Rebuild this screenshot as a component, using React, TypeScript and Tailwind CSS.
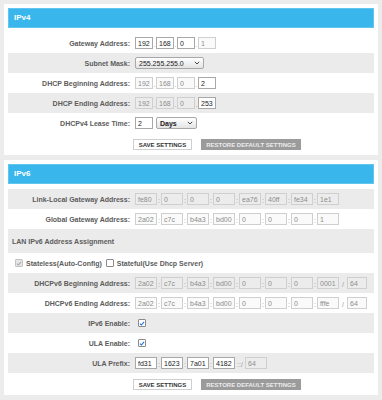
import React from "react";

function Box({ v, w = "w-[18px]", dis = false }: { v: string; w?: string; dis?: boolean }) {
  return (
    <span
      className={`${w} h-[12px] shrink-0 flex items-center px-[2px] text-[7px] leading-none border ${
        dis
          ? "bg-[rgba(239,239,239,0.3)] border-[#cfcfcf] text-[#8c8c8c]"
          : "bg-white border-[#a8a8a8] text-[#1a1a1a]"
      }`}
    >
      {v}
    </span>
  );
}

function Sep({ c, w = "w-[3px]" }: { c: string; w?: string }) {
  return (
    <span className={`${w} shrink-0 flex justify-center text-[7px] leading-none text-[#9a9a9a] pt-[2px]`}>{c}</span>
  );
}

function Row({ label, gray, children }: { label: string; gray?: boolean; children: React.ReactNode }) {
  return (
    <div className={`flex items-center h-[20px] ${gray ? "bg-[#ebebeb]" : "bg-white"}`}>
      <span className="w-[122px] shrink-0 text-right text-[7px] font-bold text-[#5c5c5c] leading-none">{label}</span>
      <div className="ml-[5px] flex items-center">{children}</div>
    </div>
  );
}

function V4({ vals, dis }: { vals: string[]; dis: boolean[] }) {
  return (
    <>
      {vals.map((v, i) => (
        <React.Fragment key={i}>
          {i > 0 && <Sep c="." />}
          <Box v={v} dis={dis[i]} />
        </React.Fragment>
      ))}
    </>
  );
}

function V6({ vals, dis, prefix }: { vals: string[]; dis: boolean[]; prefix?: boolean }) {
  return (
    <>
      {vals.map((v, i) => (
        <React.Fragment key={i}>
          {i > 0 && <Sep c=":" w="w-[4px]" />}
          <Box v={v} w="w-[22px]" dis={dis[i]} />
        </React.Fragment>
      ))}
      {prefix && (
        <>
          <Sep c="/" w="w-[8px]" />
          <Box v="64" w="w-[20px]" dis />
        </>
      )}
    </>
  );
}

function Chevron() {
  return (
    <svg width="6" height="4" viewBox="0 0 6 4" className="shrink-0">
      <path d="M0.8 0.8 L3 3 L5.2 0.8" fill="none" stroke="#333" strokeWidth="0.9" />
    </svg>
  );
}

function Select({ v, w, bold }: { v: string; w: string; bold?: boolean }) {
  return (
    <span
      className={`${w} h-[12px] shrink-0 flex items-center justify-between pl-[3px] pr-[3px] border border-[#a8a8a8] rounded-[2px] bg-gradient-to-b from-white to-[#e4e4e4] text-[7px] leading-none text-[#222] ${
        bold ? "font-bold" : ""
      }`}
    >
      <span>{v}</span>
      <Chevron />
    </span>
  );
}

function Check({ checked, dis }: { checked?: boolean; dis?: boolean }) {
  return (
    <span
      className={`w-[8px] h-[8px] shrink-0 flex items-center justify-center border rounded-[1px] ${
        dis ? "bg-[#e6e6e6] border-[#c4c4c4]" : "bg-white border-[#8a8a8a]"
      }`}
    >
      {checked && (
        <svg width="7" height="7" viewBox="0 0 8 8">
          <path
            d="M1.3 4.2 L3.2 6 L6.8 1.8"
            fill="none"
            stroke={dis ? "#a8a8a8" : "#1a6fe0"}
            strokeWidth="1.4"
          />
        </svg>
      )}
    </span>
  );
}

function Buttons() {
  return (
    <div className="flex items-center gap-[9px] pl-[125px] pt-[6px]">
      <span className="w-[59px] h-[11px] flex items-center justify-center border border-[#cfcfcf] bg-white text-[6px] font-bold text-[#333] leading-none">
        SAVE SETTINGS
      </span>
      <span className="w-[100px] h-[11px] flex items-center justify-center bg-[#9b9b9b] text-[6px] font-bold text-[#ececec] leading-none">
        RESTORE DEFAULT SETTINGS
      </span>
    </div>
  );
}

function Header({ t }: { t: string }) {
  return (
    <div className="h-[20px] flex items-center pl-[5px] bg-[#39b6ec] border border-[#62c5f0] text-white text-[8px] font-bold leading-none">
      {t}
    </div>
  );
}

const ALL = [true, true, true, true, true, true, true, true];

export default function App() {
  return (
    <div className="min-h-[400px] bg-[#ececec] pt-[4px] px-[4px] font-['Liberation_Sans',Arial,sans-serif]">
      <section className="bg-white px-[4px] pt-[4px] pb-[5px]">
        <Header t="IPv4" />
        <div className="mt-[5px]">
          <Row label="Gateway Address:">
            <V4 vals={["192", "168", "0", "1"]} dis={[false, false, false, true]} />
          </Row>
          <Row label="Subnet Mask:" gray>
            <Select v="255.255.255.0" w="w-[69px]" />
          </Row>
          <Row label="DHCP Beginning Address:">
            <V4 vals={["192", "168", "0", "2"]} dis={[true, true, true, false]} />
          </Row>
          <Row label="DHCP Ending Address:" gray>
            <V4 vals={["192", "168", "0", "253"]} dis={[true, true, true, false]} />
          </Row>
          <Row label="DHCPv4 Lease Time:">
            <Box v="2" />
            <span className="w-[3px]" />
            <Select v="Days" w="w-[41px]" bold />
          </Row>
        </div>
        <Buttons />
      </section>

      <section className="mt-[5px] bg-white px-[4px] pt-[4px] pb-[5px]">
        <Header t="IPv6" />
        <div className="mt-[5px]">
          <Row label="Link-Local Gateway Address:" gray>
            <V6 vals={["fe80", "0", "0", "0", "ea76", "40ff", "fe34", "1e1"]} dis={ALL} />
          </Row>
          <Row label="Global Gateway Address:">
            <V6 vals={["2a02", "c7c", "b4a3", "bd00", "0", "0", "0", "1"]} dis={ALL} />
          </Row>
          <div className="h-[24px] flex items-center bg-[#ebebeb] pl-[4px] text-[7px] font-bold text-[#5c5c5c] leading-none">
            LAN IPv6 Address Assignment
          </div>
          <div className="h-[20px] flex items-center bg-white pl-[7px] text-[7px] font-bold text-[#5c5c5c] leading-none">
            <Check checked dis />
            <span className="ml-[3px]">Stateless(Auto-Config)</span>
            <span className="ml-[4px]">
              <Check />
            </span>
            <span className="ml-[3px]">Stateful(Use Dhcp Server)</span>
          </div>
          <Row label="DHCPv6 Beginning Address:" gray>
            <V6 vals={["2a02", "c7c", "b4a3", "bd00", "0", "0", "0", "0001"]} dis={ALL} prefix />
          </Row>
          <Row label="DHCPv6 Ending Address:">
            <V6 vals={["2a02", "c7c", "b4a3", "bd00", "0", "0", "0", "fffe"]} dis={ALL} prefix />
          </Row>
          <Row label="IPv6 Enable:" gray>
            <span className="ml-[3px]">
              <Check checked />
            </span>
          </Row>
          <Row label="ULA Enable:">
            <span className="ml-[3px]">
              <Check checked />
            </span>
          </Row>
          <Row label="ULA Prefix:" gray>
            <V6 vals={["fd31", "1623", "7a01", "4182"]} dis={[false, false, false, false]} />
            <span className="w-[10px] shrink-0 text-[7px] text-[#9a9a9a] leading-none pt-[2px] text-center">::/</span>
            <Box v="64" w="w-[22px]" dis />
          </Row>
        </div>
        <Buttons />
      </section>
    </div>
  );
}
